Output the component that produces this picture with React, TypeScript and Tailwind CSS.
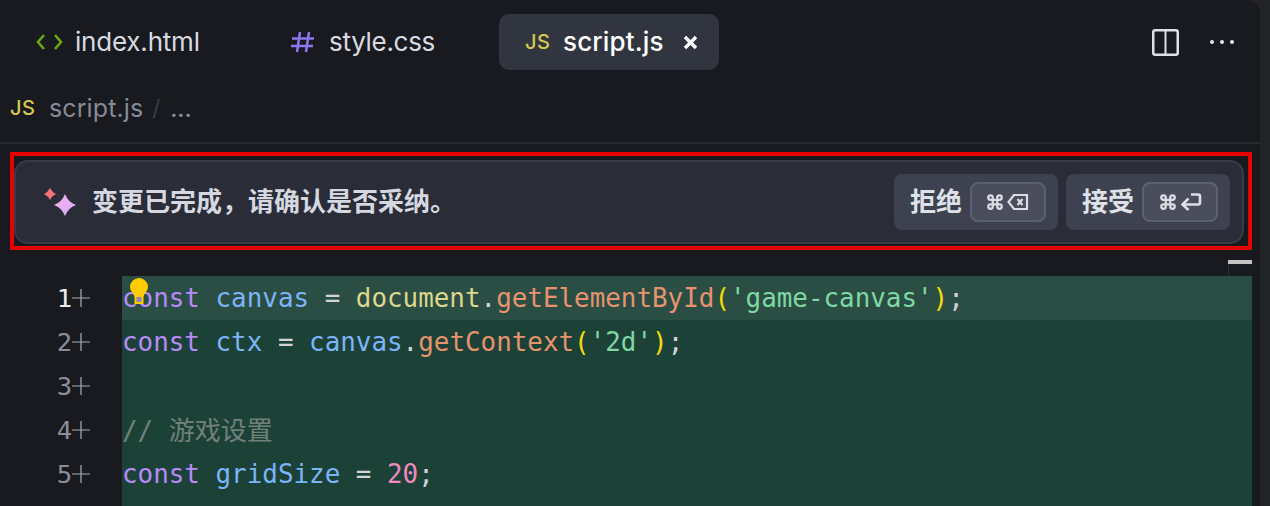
import React from "react";
import { Command } from "lucide-react";

const sans = "font-['Inter','Noto_Sans_CJK_SC',sans-serif]";

function JsIcon({ className }: { className: string }) {
  return <span className={`font-medium text-[#d6c84f] text-[20px] leading-none tracking-[0.6px] ${className}`}>JS</span>;
}

function Sparkle() {
  return (
    <svg width="36" height="36" viewBox="0 0 36 36" className="shrink-0">
      <defs>
        <linearGradient id="sp" x1="0" y1="0" x2="1" y2="1">
          <stop offset="0" stopColor="#f7b3e6" />
          <stop offset="1" stopColor="#d9a8ff" />
        </linearGradient>
      </defs>
      <path d="M7 4 Q9 8 13 10 Q9 12 7 16 Q5 12 1 10 Q5 8 7 4Z" fill="#f4727c" />
      <path d="M22 10 Q25 18 33 21 Q25 24 22 32 Q19 24 11 21 Q19 18 22 10Z" fill="url(#sp)" />
    </svg>
  );
}

function Kbd({ children, cmdMargin }: { children: React.ReactNode; cmdMargin: string }) {
  return (
    <span className="flex h-[40px] w-[76px] items-center rounded-[8px] border-2 border-[#5d6072] bg-[#4a4d5c]">
      <Command size={18} strokeWidth={3} color="#dcdee6" className={`shrink-0 ${cmdMargin}`} />
      {children}
    </span>
  );
}

function Action({ label, children }: { label: string; children: React.ReactNode }) {
  return (
    <div className="flex h-[56px] w-[164px] items-center gap-[8px] rounded-[8px] bg-[#3e4250] pl-[16px]">
      <span className="text-[26px] font-semibold leading-none text-[#dfe1e8]">{label}</span>
      {children}
    </div>
  );
}

const K = ({ c }: { c: string }) => <span className="text-[#b78af7]">{c}</span>;
const V = ({ c }: { c: string }) => <span className="text-[#7cb4f8]">{c}</span>;
const O = ({ c }: { c: string }) => <span className="text-[#d0d4d6]">{c}</span>;
const D = ({ c }: { c: string }) => <span className="text-[#dcd78a]">{c}</span>;
const F = ({ c }: { c: string }) => <span className="text-[#e6936e]">{c}</span>;
const P = ({ c }: { c: string }) => <span className="text-[#f5d90a]">{c}</span>;
const S = ({ c }: { c: string }) => <span className="text-[#7fd8a4]">{c}</span>;

const lines: React.ReactNode[] = [
  <><K c="const" /> <V c="canvas" /> <O c="=" /> <D c="document" /><O c="." /><F c="getElementById" /><P c="(" /><S c="'game-canvas'" /><P c=")" /><O c=";" /></>,
  <><K c="const" /> <V c="ctx" /> <O c="=" /> <V c="canvas" /><O c="." /><F c="getContext" /><P c="(" /><S c="'2d'" /><P c=")" /><O c=";" /></>,
  <>&nbsp;</>,
  <span className="text-[#72807b]">// <span className="font-['Noto_Sans_CJK_SC',sans-serif] text-[26px]">游戏设置</span></span>,
  <><K c="const" /> <V c="gridSize" /> <O c="=" /> <span className="text-[#f08ac0]">20</span><O c=";" /></>,
];

export default function App() {
  return (
    <div className={`flex h-[506px] w-[1270px] overflow-hidden bg-[#232428] ${sans}`}>
      <div className="flex w-[1260px] flex-col rounded-tr-[14px] bg-[#181a1f]">
        <div className="flex h-[84px] shrink-0 items-start pt-[14px]">
          <div className="ml-[36px] flex h-[56px] w-[172px] items-center">
            <svg width="27" height="18" viewBox="0 0 27 18" fill="none" stroke="#6aa80f" strokeWidth="2.600" className="shrink-0">
              <path d="M8 2 L2 9 L8 16" />
              <path d="M19 2 L25 9 L19 16" />
            </svg>
            <span className="ml-[12px] text-[26px] leading-none tracking-[-0.2px] text-[#d8dae2]">index.html</span>
          </div>
          <div className="ml-[83px] flex h-[56px] w-[208px] items-center">
            <svg width="24" height="22" viewBox="0 0 24 22" fill="none" stroke="#8b78ee" strokeWidth="2.500" className="shrink-0">
              <path d="M1 7.500 H23 M0 15 H22 M9 1 L6 21 M18 1 L15 21" />
            </svg>
            <span className="ml-[14px] text-[26px] leading-none tracking-[-0.3px] text-[#d8dae2]">style.css</span>
          </div>
          <div className="flex h-[56px] w-[220px] items-center rounded-[10px] bg-[#313540] pl-[26px]">
            <JsIcon className="w-[24px]" />
            <span className="ml-[14px] text-[26px] font-medium leading-none tracking-[0.15px] text-white">script.js</span>
            <svg width="15" height="15" viewBox="0 0 15 15" stroke="#ffffff" strokeWidth="3.400" className="ml-[19px] shrink-0">
              <path d="M2 2 L13 13 M13 2 L2 13" />
            </svg>
          </div>
          <div className="ml-auto mr-[25px] flex h-[56px] items-center gap-[30px]">
            <svg width="27" height="27" viewBox="0 0 27 27" fill="none" stroke="#dfe1e8" strokeWidth="2.500">
              <rect x="1.250" y="1.250" width="24.500" height="24.500" rx="2" />
              <path d="M13.500 1.250 V25.750" strokeWidth="2" />
            </svg>
            <svg width="26" height="6" viewBox="0 0 26 6" fill="#e6e8ee">
              <circle cx="3" cy="3" r="2" /><circle cx="13" cy="3" r="2" /><circle cx="23" cy="3" r="2" />
            </svg>
          </div>
        </div>

        <div className="flex h-[60px] shrink-0 items-start border-b-2 border-[#262a31] pl-[10px] pt-[9px]">
          <div className="flex h-[30px] items-center">
            <JsIcon className="w-[24px]" />
            <span className="ml-[15px] text-[25px] leading-none tracking-[0.1px] text-[#868a96]">script.js</span>
            <span className="ml-[9px] text-[22px] leading-none text-[#3c3f48]">/</span>
            <span className="ml-[10px] text-[25px] leading-none text-[#8f929c]">...</span>
          </div>
        </div>

        <div className="ml-[10px] mt-[8px] h-[98px] w-[1242px] shrink-0 border-4 border-[#e60000] pb-[2px] pr-[4px] pt-[4px]">
          <div className="flex h-[84px] items-center rounded-[14px] border-2 border-[#383b46] bg-[#2a2c37] pl-[27px] pr-[12px]">
            <Sparkle />
            <span className="ml-[13px] text-[26px] font-semibold leading-none text-[#d5d8e0]">变更已完成，请确认是否采纳。</span>
            <div className="ml-auto flex gap-[8px]">
              <Action label="拒绝">
                <Kbd cmdMargin="ml-[14px]">
                  <svg width="22" height="18" viewBox="0 0 22 18" fill="none" stroke="#dcdee6" strokeWidth="2.200" className="ml-[3px] shrink-0">
                    <path d="M7 2 H20 V16 H7 L1.500 9 Z" />
                    <path d="M10.500 6 L15.500 12 M15.500 6 L10.500 12" />
                  </svg>
                </Kbd>
              </Action>
              <Action label="接受">
                <Kbd cmdMargin="ml-[15px]">
                  <svg width="22" height="18" viewBox="0 0 22 18" fill="none" stroke="#dcdee6" strokeWidth="2.600" className="ml-[3px] shrink-0">
                    <path d="M11 1.500 H18 Q20 1.500 20 3.500 V9.500 Q20 11.500 18 11.500 H3 M8.500 5.500 L2.500 11.500 L8.500 17" />
                  </svg>
                </Kbd>
              </Action>
            </div>
          </div>
        </div>

        <div className="relative mt-[26px] flex min-h-0 flex-1 pr-[8px] font-['DejaVu_Sans_Mono','Noto_Sans_CJK_SC',monospace]">
          <div className="w-[122px] shrink-0">
            {lines.map((_, i) => (
              <div key={i} className="flex h-[44px] items-center justify-end pr-[32px] text-[25.500px]">
                <span className={i === 0 ? "text-[#eceef2]" : "text-[#8b8e98]"}>{i + 1}</span>
                <svg width="18" height="18" viewBox="0 0 18 18" stroke="#a9adb3" strokeWidth="1.200" className="shrink-0">
                  <path d="M0 9 H18 M9 0 V18" />
                </svg>
              </div>
            ))}
          </div>
          <div className="flex-1 bg-[#1c4237]">
            {lines.map((l, i) => (
              <div key={i} className={`flex h-[44px] items-center whitespace-pre text-[25.900px] leading-none ${i === 0 ? "bg-[#2b4e44]" : ""} ${i === 3 ? "pt-0" : "pt-[2px]"}`}>
                <span>{l}</span>
              </div>
            ))}
          </div>
          <svg width="18" height="26" viewBox="0 0 18 26" className="absolute left-[130px] top-[2px]">
            <path d="M9 0 A9 9 0 0 1 18 9 C18 13 14 15 13.500 19 V26 H4.500 V19 C4 15 0 13 0 9 A9 9 0 0 1 9 0Z" fill="#ffcc00" />
            <rect x="6.500" y="19" width="5" height="5" fill="#8f84c0" />
          </svg>
          <div className="absolute left-[1228px] top-[-16px] h-[4px] w-[24px] bg-[#c4c4c4]" />
          <div className="absolute left-[1228px] top-[-12px] h-[12px] w-px bg-[#2e3036]" />
        </div>
      </div>
    </div>
  );
}
